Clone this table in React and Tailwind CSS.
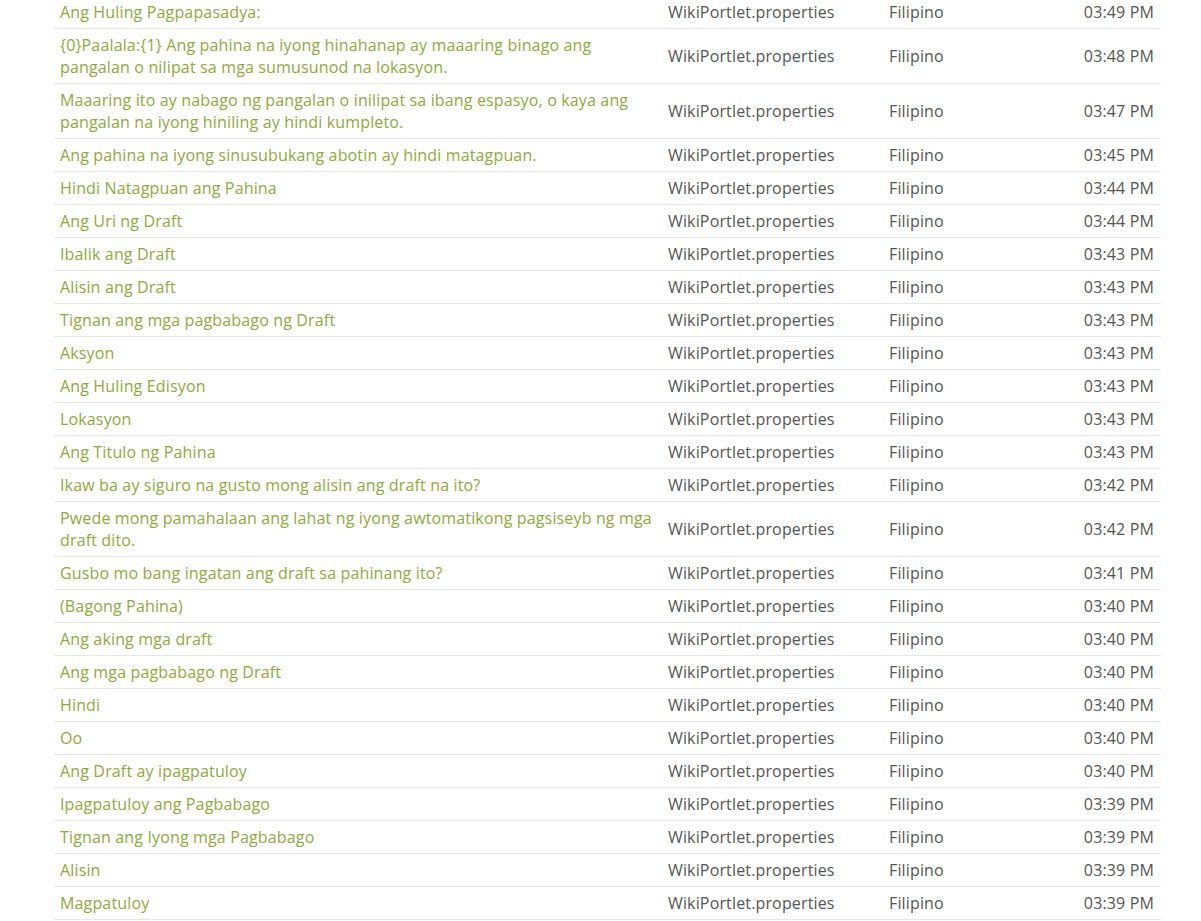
import React from 'react';

const rows = [
  ['Ang Huling Pagpapasadya:', '03:49 PM'],
  ['{0}Paalala:{1} Ang pahina na iyong hinahanap ay maaaring binago ang pangalan o nilipat sa mga sumusunod na lokasyon.', '03:48 PM'],
  ['Maaaring ito ay nabago ng pangalan o inilipat sa ibang espasyo, o kaya ang pangalan na iyong hiniling ay hindi kumpleto.', '03:47 PM'],
  ['Ang pahina na iyong sinusubukang abotin ay hindi matagpuan.', '03:45 PM'],
  ['Hindi Natagpuan ang Pahina', '03:44 PM'],
  ['Ang Uri ng Draft', '03:44 PM'],
  ['Ibalik ang Draft', '03:43 PM'],
  ['Alisin ang Draft', '03:43 PM'],
  ['Tignan ang mga pagbabago ng Draft', '03:43 PM'],
  ['Aksyon', '03:43 PM'],
  ['Ang Huling Edisyon', '03:43 PM'],
  ['Lokasyon', '03:43 PM'],
  ['Ang Titulo ng Pahina', '03:43 PM'],
  ['Ikaw ba ay siguro na gusto mong alisin ang draft na ito?', '03:42 PM'],
  ['Pwede mong pamahalaan ang lahat ng iyong awtomatikong pagsiseyb ng mga draft dito.', '03:42 PM'],
  ['Gusbo mo bang ingatan ang draft sa pahinang ito?', '03:41 PM'],
  ['(Bagong Pahina)', '03:40 PM'],
  ['Ang aking mga draft', '03:40 PM'],
  ['Ang mga pagbabago ng Draft', '03:40 PM'],
  ['Hindi', '03:40 PM'],
  ['Oo', '03:40 PM'],
  ['Ang Draft ay ipagpatuloy', '03:40 PM'],
  ['Ipagpatuloy ang Pagbabago', '03:39 PM'],
  ['Tignan ang Iyong mga Pagbabago', '03:39 PM'],
  ['Alisin', '03:39 PM'],
  ['Magpatuloy', '03:39 PM'],
];

export default function App() {
  return (
    <div className="min-h-screen bg-white overflow-hidden" style={{ fontFamily: '"Open Sans", sans-serif' }}>
      <div className="ml-[54px] w-[1107px] mt-[-4px] text-[16px] leading-[22px] tracking-[0.15px] text-[#555]">
        {rows.map(([text, time], i) => (
          <div key={i} className="flex items-center border-b border-[#e8e8e8]">
            <div className="w-[608px] shrink-0 px-[6px] py-[5px] text-[#8fa940]">
              <a href="#">{text}</a>
            </div>
            <div className="w-[221px] shrink-0 px-[6px]">WikiPortlet.properties</div>
            <div className="flex-1 px-[6px]">Filipino</div>
            <div className="px-[7px] text-right">{time}</div>
          </div>
        ))}
      </div>
    </div>
  );
}
